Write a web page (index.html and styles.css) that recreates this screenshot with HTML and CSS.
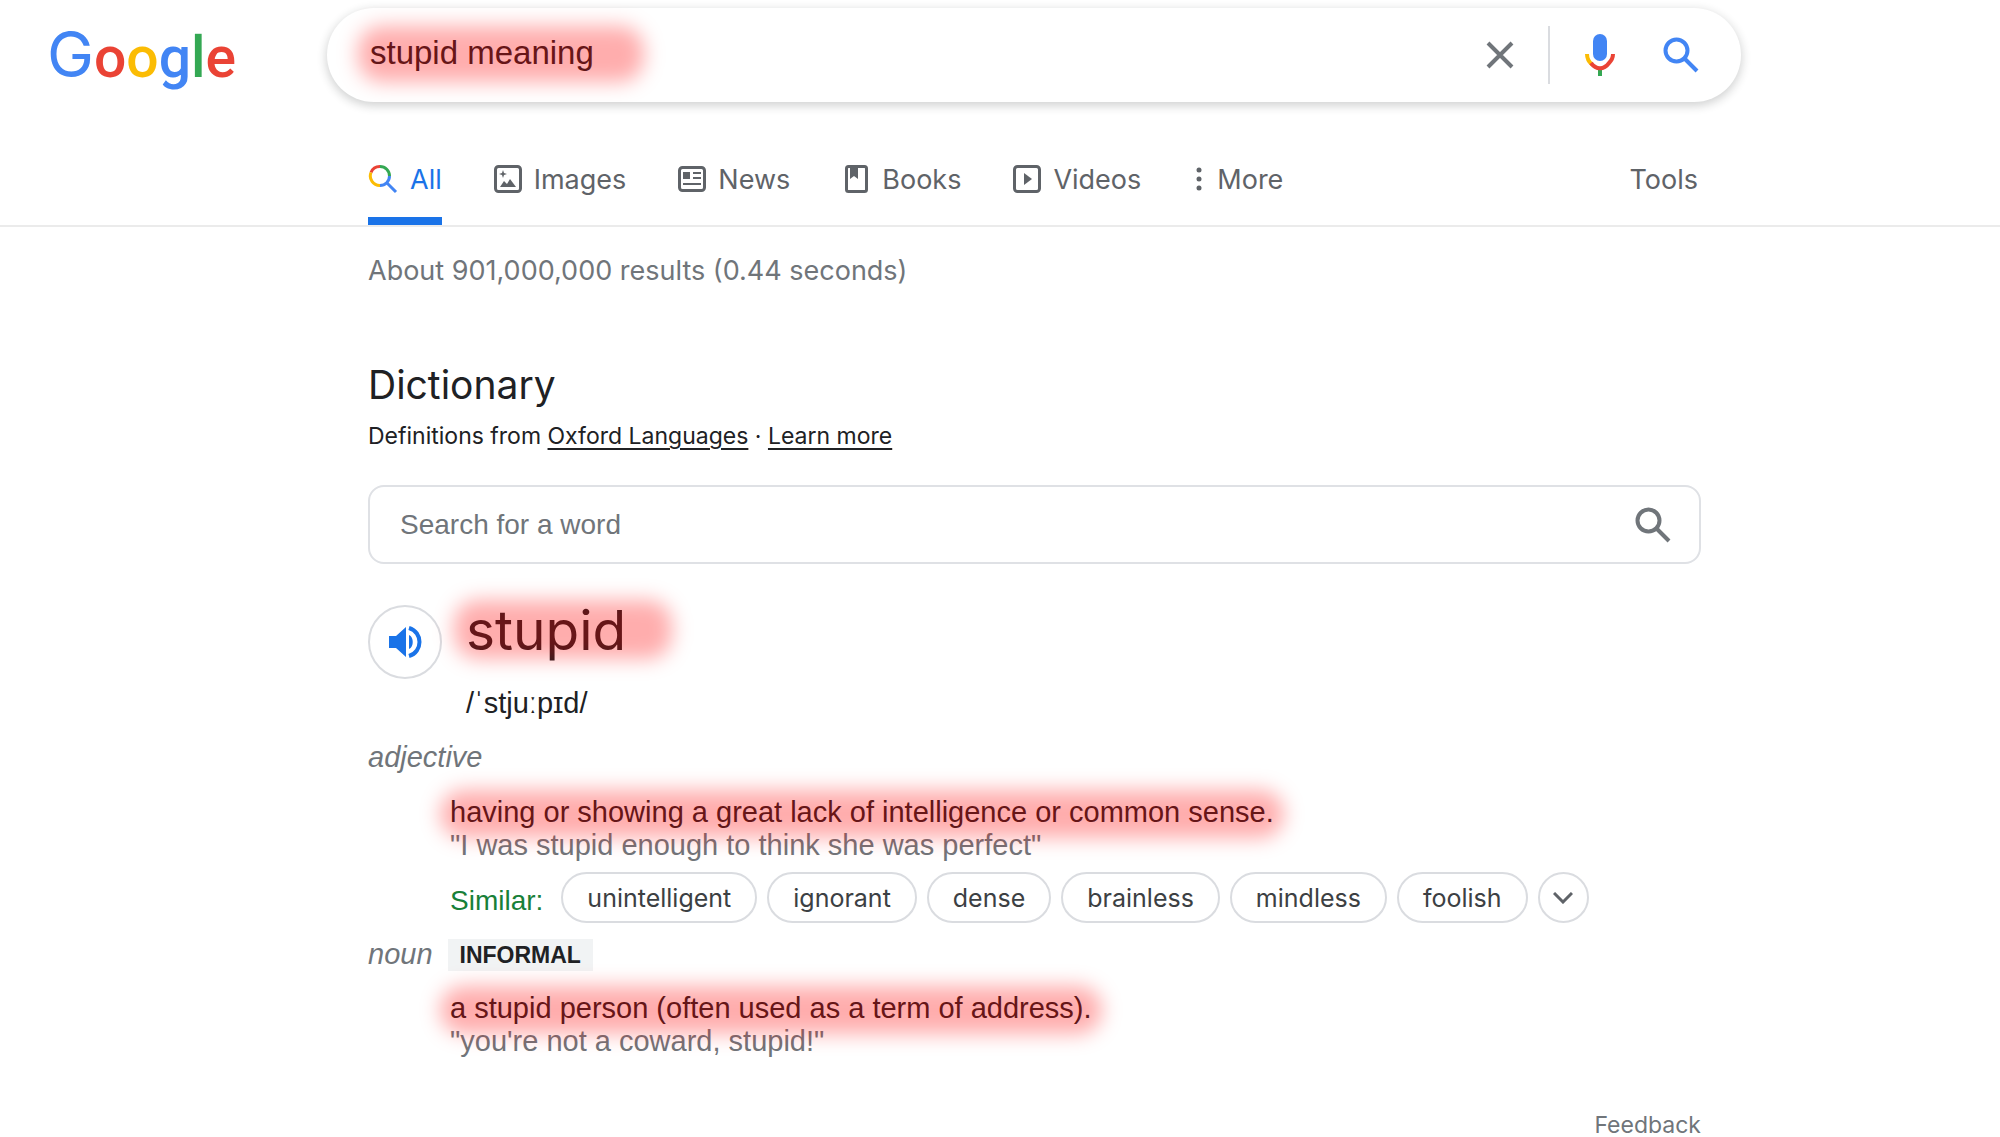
FILE: index.html
```html
<!DOCTYPE html>
<html lang="en">
<head>
	<meta charset="utf-8">
	<title>stupid meaning - Google Search</title>
	<link rel="stylesheet" href="styles.css">
</head>
<body>
	<header class="header">
		<a class="logo" href="#" aria-label="Google"><span class="capital blue">G</span><span class="red">o</span><span class="yellow">o</span><span class="blue">g</span><span class="green">l</span><span class="red">e</span></a>
		<form class="search-bar">
			<div class="query highlight">
				<input type="text" name="q" value="stupid meaning" aria-label="Search">
			</div>
			<button type="reset" class="clear" aria-label="Clear">
				<svg width="28" height="28" viewBox="0 0 28 28"><path d="M2 2l24 24M26 2L2 26" fill="none" stroke="#70757a" stroke-width="4"/></svg>
			</button>
			<button type="button" class="voice" aria-label="Search by voice">
				<svg width="34" height="42" viewBox="0 0 34 42">
					<rect x="10" y="0" width="14" height="27" rx="7" fill="#4285f4"/>
					<path d="M15 34h4v8h-4z" fill="#34a853"/>
					<path d="M4 20c0 4 2 8 5 10.500" fill="none" stroke="#fbbc04" stroke-width="4"/>
					<path d="M8 29c5 7 13 7 18 0c3-3 4-6 4-9" fill="none" stroke="#ea4335" stroke-width="4"/>
				</svg>
			</button>
			<button type="submit" class="submit" aria-label="Google Search">
				<svg width="36" height="36" viewBox="0 0 36 36"><g fill="none" stroke="#4285f4" stroke-width="4"><circle cx="13.500" cy="13.500" r="11"/><path d="M21.500 21.500L34 34"/></g></svg>
			</button>
		</form>
	</header>

	<nav class="tabs">
		<a class="tab active" href="#">
			<svg width="30" height="30" viewBox="0 0 30 30" fill="none" stroke-width="3">
				<path d="M3 8.500A9.500 9.500 0 0 1 12 2.500" stroke="#ea4335"/>
				<path d="M12 2.500A9.500 9.500 0 0 1 21.500 12" stroke="#34a853"/>
				<path d="M3 8.500A9.500 9.500 0 0 0 12 21.500" stroke="#fbbc04"/>
				<path d="M12 21.500A9.500 9.500 0 0 0 21.500 12M18.500 18.500L28 28" stroke="#4285f4"/>
			</svg>
			All
		</a>
		<a class="tab" href="#">
			<svg width="28" height="28" viewBox="0 0 28 28">
				<rect x="1.500" y="1.500" width="25" height="25" rx="3" fill="none" stroke="#5f6368" stroke-width="3"/>
				<path d="M6 22l4-6 3 3 3-5 6 8z" fill="#5f6368"/>
				<path d="M9 5l1 3 3 1-3 1-1 3-1-3-3-1 3-1z" fill="#5f6368"/>
			</svg>
			Images
		</a>
		<a class="tab" href="#">
			<svg width="28" height="26" viewBox="0 0 28 26">
				<rect x="1.500" y="1.500" width="25" height="23" rx="3" fill="none" stroke="#5f6368" stroke-width="3"/>
				<path d="M5 6h7v7H5zM15 6h8v2h-8zM15 11h8v2h-8zM5 17h18v2H5z" fill="#5f6368"/>
			</svg>
			News
		</a>
		<a class="tab" href="#">
			<svg width="28" height="28" viewBox="0 0 28 28">
				<rect x="4.500" y="1.500" width="20" height="25" rx="2" fill="none" stroke="#5f6368" stroke-width="3"/>
				<path d="M8 2h8v12l-4-3-4 3z" fill="#5f6368"/>
			</svg>
			Books
		</a>
		<a class="tab" href="#">
			<svg width="28" height="28" viewBox="0 0 28 28">
				<rect x="1.500" y="1.500" width="25" height="25" rx="3" fill="none" stroke="#5f6368" stroke-width="3"/>
				<path d="M11 8l8 6-8 6z" fill="#5f6368"/>
			</svg>
			Videos
		</a>
		<a class="tab more" href="#">
			<svg width="12" height="24" viewBox="0 0 12 24" fill="#5f6368"><circle cx="6" cy="3" r="2.500"/><circle cx="6" cy="12" r="2.500"/><circle cx="6" cy="21" r="2.500"/></svg>
			More
		</a>
		<a class="tab tools" href="#">Tools</a>
	</nav>

	<main class="results">
		<p class="stats">About 901,000,000 results (0.44 seconds)</p>

		<h1>Dictionary</h1>
		<p class="source">Definitions from <a href="#">Oxford Languages</a> · <a href="#">Learn more</a></p>

		<form class="word-search">
			<input type="text" placeholder="Search for a word" aria-label="Search for a word">
			<button type="submit" aria-label="Look up">
				<svg width="36" height="36" viewBox="0 0 36 36"><g fill="none" stroke="#70757a" stroke-width="4"><circle cx="13.500" cy="13.500" r="11"/><path d="M21.500 21.500L34 34"/></g></svg>
			</button>
		</form>

		<div class="entry">
			<button class="speaker" aria-label="Listen">
				<svg width="34" height="34" viewBox="0 0 34 34">
					<path d="M1 11h7l10-9v30l-10-9H1z" fill="#1a73e8"/>
					<path d="M21 10c5 2 5 12 0 14z" fill="#1a73e8"/>
					<path d="M21 3c14 4 14 24 0 28" fill="none" stroke="#1a73e8" stroke-width="4"/>
				</svg>
			</button>
			<div>
				<h2><span class="highlight">stupid</span></h2>
				<p class="phonetic">/ˈstjuːpɪd/</p>
			</div>
		</div>

		<p class="pos">adjective</p>
		<div class="sense">
			<p><span class="definition highlight">having or showing a great lack of intelligence or common sense.</span></p>
			<p class="quote">"I was stupid enough to think she was perfect"</p>
			<div class="similar">
				<span class="similar-label">Similar:</span>
				<button class="chip">unintelligent</button>
				<button class="chip">ignorant</button>
				<button class="chip">dense</button>
				<button class="chip">brainless</button>
				<button class="chip">mindless</button>
				<button class="chip">foolish</button>
				<button class="chip expand" aria-label="Show more">
					<svg width="20" height="12" viewBox="0 0 20 12"><path d="M1 1l9 9 9-9" fill="none" stroke="#5f6368" stroke-width="3"/></svg>
				</button>
			</div>
		</div>

		<p class="pos noun">noun <span class="register">INFORMAL</span></p>
		<div class="sense">
			<p><span class="definition highlight">a stupid person (often used as a term of address).</span></p>
			<p class="quote">"you're not a coward, stupid!"</p>
		</div>

		<a class="feedback" href="#">Feedback</a>
	</main>
</body>
</html>
```
FILE: styles.css
```css
* {
	box-sizing: border-box;
}
body {
	margin: 0;
	background: #fff;
	color: #202124;
	font-family: "Liberation Sans", Arial, sans-serif;
	font-size: 29px;
	line-height: 33px;
}
h1, h2, p {
	margin: 0;
	font-weight: 400;
}
a {
	color: inherit;
}
button {
	padding: 0;
	border: 0;
	background: none;
	cursor: pointer;
}
svg {
	display: block;
	flex: none;
}
input {
	border: 0;
	outline: 0;
	background: none;
	font-family: inherit;
}

/* soft red marker over a phrase */
.highlight {
	position: relative;
}
.highlight::after {
	content: "";
	position: absolute;
	inset: -6px -10px -10px -10px;
	border-radius: 24px;
	background: rgba(255, 0, 0, 0.32);
	filter: blur(10px);
	pointer-events: none;
}

/* header */
.header {
	display: flex;
	padding: 8px 40px 0 47px;
}
.logo {
	flex: none;
	width: 280px;
	padding-top: 8px;
	font-family: Roboto, sans-serif;
	font-size: 57px;
	font-weight: 500;
	line-height: 76px;
	text-decoration: none;
}
.capital {
	font-family: Inter, sans-serif;
	font-size: 63px;
	font-weight: 400;
}
.blue { color: #4285f4; }
.red { color: #ea4335; }
.yellow { color: #fbbc04; }
.green { color: #34a853; }
.search-bar {
	display: flex;
	align-items: center;
	flex: 1;
	max-width: 1414px;
	height: 94px;
	padding: 0 42px 0 43px;
	border-radius: 47px;
	box-shadow: 0 3px 10px 1px rgba(32, 33, 36, 0.2);
}
.query {
	flex: 1;
	padding-bottom: 4px;
}
.query input {
	width: 100%;
	padding: 0;
	color: #202124;
	font-size: 33px;
	line-height: 40px;
}
.query.highlight::after {
	inset: -7px auto -5px -12px;
	width: 286px;
}
.voice {
	margin: 0 46px 0 33px;
}
.clear {
	height: 58px;
	padding-right: 34px;
	border-right: 2px solid #dadce0;
}

/* tabs */
.tabs {
	display: flex;
	gap: 52px;
	margin-top: 31px;
	padding-left: 368px;
	border-bottom: 2px solid #ebebeb;
	color: #5f6368;
	font-family: Inter, sans-serif;
	font-size: 27px;
}
.tab {
	display: flex;
	align-items: center;
	gap: 12px;
	height: 92px;
	text-decoration: none;
}
.active {
	color: #1a73e8;
	box-shadow: inset 0 -8px #1a73e8;
}
.tools {
	margin-left: auto;
	margin-right: 302px;
}

/* results */
.results {
	max-width: 1701px;
	padding-left: 368px;
}
.stats {
	margin-top: 26px;
	color: #70757a;
	font-family: Inter, sans-serif;
	font-size: 27px;
	line-height: 36px;
}
h1 {
	margin-top: 72px;
	font-family: Inter, sans-serif;
	font-size: 39px;
	line-height: 48px;
}
.source {
	margin-top: 11px;
	font-family: Inter, sans-serif;
	font-size: 23px;
	line-height: 32px;
}
.source a {
	text-underline-offset: 4px;
}
.word-search {
	display: flex;
	align-items: center;
	height: 79px;
	margin-top: 33px;
	padding: 0 28px 0 30px;
	border: 2px solid #dfe1e5;
	border-radius: 16px;
}
.word-search input {
	flex: 1;
	padding: 0;
	font-size: 28px;
}
.word-search input::placeholder {
	color: #70757a;
}
.entry {
	display: flex;
	gap: 24px;
	margin-top: 35px;
}
.speaker {
	display: flex;
	align-items: center;
	justify-content: center;
	width: 74px;
	height: 74px;
	margin-top: 6px;
	border: 2px solid #dadce0;
	border-radius: 50%;
}
h2 {
	font-family: Inter, sans-serif;
	font-size: 55px;
	line-height: 62px;
}
h2 .highlight::after {
	inset: 3px -46px 4px -12px;
}
.phonetic {
	margin-top: 24px;
	line-height: 36px;
}
.pos {
	margin-top: 18px;
	color: #70757a;
	font-style: italic;
	line-height: 36px;
}
.sense {
	margin-top: 21px;
	padding-left: 82px;
}
.quote {
	color: #70757a;
}
.similar {
	display: flex;
	align-items: center;
	gap: 10px;
	margin-top: 10px;
}
.similar-label {
	margin-right: 8px;
	padding-top: 5px;
	color: #188038;
	font-size: 28px;
}
.chip {
	height: 51px;
	padding: 0 24px;
	border: 2px solid #dadce0;
	border-radius: 26px;
	color: #3c4043;
	font-family: Inter, sans-serif;
	font-size: 25px;
}
.expand {
	display: flex;
	align-items: center;
	justify-content: center;
	width: 51px;
	padding: 0;
}
.noun {
	display: flex;
	gap: 15px;
	margin-top: 16px;
	line-height: 30px;
}
.register {
	padding: 0 12px;
	background: #f1f3f4;
	color: #202124;
	font-size: 23px;
	font-style: normal;
	font-weight: 700;
	line-height: 32px;
}
.feedback {
	display: block;
	margin-top: 57px;
	color: #70757a;
	font-family: Inter, sans-serif;
	font-size: 23px;
	line-height: 20px;
	text-align: right;
	text-decoration: none;
}
```
